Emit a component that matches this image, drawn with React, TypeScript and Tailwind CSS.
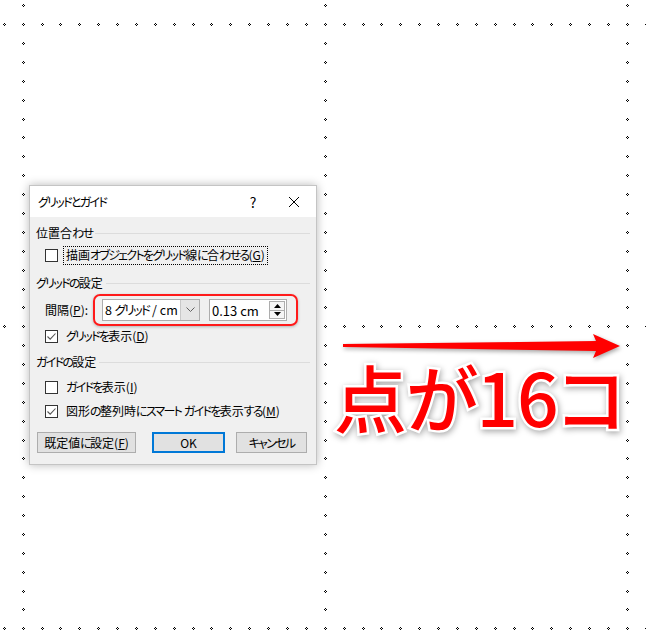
import React from "react";

const XS: number[] = [];
const YS: number[] = [];
for (let i = -1; i <= 33; i++) {
  XS.push(Math.round(22.7 + i * 18.88));
  YS.push(Math.round(24.2 + i * 18.88));
}

function DotGrid() {
  const dots: [number, number][] = [];
  const lineY = [0, 16, 32].map((i) => YS[i + 1]);
  const lineX = [0, 16, 32].map((i) => XS[i + 1]);
  lineY.forEach((y) => XS.forEach((x) => dots.push([x, y])));
  lineX.forEach((x) => YS.forEach((y) => dots.push([x, y])));
  const d = dots
    .map(
      ([x, y]) =>
        `M${x - 1} ${y}h1v1h-1z M${x + 1} ${y}h1v1h-1z M${x} ${y - 1}h1v1h-1z M${x} ${y + 1}h1v1h-1z`
    )
    .join(" ");
  return (
    <svg width={646} height={644} className="absolute left-0 top-0" shapeRendering="crispEdges">
      <path d={d} fill="#000" />
    </svg>
  );
}

// Render text with narrower kana (Meiryo UI-like proportional kana)
function T({ s }: { s: string }) {
  const parts: { k: boolean; t: string }[] = [];
  for (const ch of s) {
    const k = /[\u3040-\u30ff]/.test(ch);
    const last = parts[parts.length - 1];
    if (last && last.k === k) last.t += ch;
    else parts.push({ k, t: ch });
  }
  return (
    <>
      {parts.map((p, i) =>
        p.k ? (
          <span key={i} className="tracking-[-1.7px]">
            {p.t}
          </span>
        ) : (
          <span key={i}>{p.t}</span>
        )
      )}
    </>
  );
}

function Check({ checked }: { checked?: boolean }) {
  return (
    <div className="w-[13px] h-[13px] border border-[#333333] bg-white flex items-center justify-center shrink-0">
      {checked && (
        <svg width="11" height="11" viewBox="0 0 11 11">
          <path d="M1.5 5.5 L4.2 8.2 L9.5 2.5" fill="none" stroke="#555" strokeWidth="1.1" />
        </svg>
      )}
    </div>
  );
}

function Section({ label }: { label: string }) {
  return (
    <div className="h-[22px] flex items-center gap-[3px]">
      <span>
        <T s={label} />
      </span>
      <div className="flex-1 h-px bg-[#dcdcdc]" />
    </div>
  );
}

function Btn({ children, w, primary }: { children: React.ReactNode; w: string; primary?: boolean }) {
  return (
    <div
      className={
        "h-[21px] flex items-center justify-center bg-[#e1e1e1] " +
        w +
        (primary ? " border-2 border-[#0078d7]" : " border border-[#adadad]")
      }
    >
      {children}
    </div>
  );
}

export default function App() {
  return (
    <div className="relative w-[646px] h-[644px] bg-white overflow-hidden">
      <DotGrid />

      {/* Dialog window */}
      <div className="absolute left-[29px] top-[185px] w-[288px] h-[280px] bg-[#f0f0f0] border border-[#c4c4c4] shadow-[0_0_9px_rgba(0,0,0,0.28)] flex flex-col text-[12px] leading-none text-black font-['Noto_Sans_CJK_JP','Noto_Sans',sans-serif] [font-feature-settings:'palt']">
        <div className="h-[31px] bg-white flex items-center pl-[8px] shrink-0">
          <span className="flex-1">
            <T s="グリッドとガイド" />
          </span>
          <span className="w-[20px] text-center text-[14px] mr-[26px]">?</span>
          <svg width="10" height="10" viewBox="0 0 10 10" className="mr-[17px]">
            <path d="M0 0 L10 10 M10 0 L0 10" stroke="#000" strokeWidth="1" />
          </svg>
        </div>
        <div className="flex flex-col px-[6px] pt-[5px]">
          <Section label="位置合わせ" />
          <div className="h-[22px] flex items-center pl-[9px]">
            <Check />
            <span className="ml-[5px] h-[19px] px-[2px] flex items-center border border-dotted border-black whitespace-nowrap">
              <T s="描画オブジェクトをグリッド線に合わせる(" />
              <span className="underline">G</span>)
            </span>
          </div>
          <div className="mt-[6px]">
            <Section label="グリッドの設定" />
          </div>
          <div className="h-[32px] flex items-center pl-[9px]">
            <span className="w-[48px] whitespace-nowrap">
              間隔(<span className="underline">P</span>):
            </span>
            <div className="h-[32px] flex items-center border-2 border-[#ff1a1a] rounded-[7px] pl-[7px] pr-[9px] shadow-[0_1px_3px_rgba(0,0,0,0.25)]">
              <div className="w-[98px] h-[22px] flex border border-[#adadad] bg-white">
                <div className="flex-1 flex items-center pl-[2px] text-[12.5px] whitespace-nowrap overflow-hidden">
                  <span>8&nbsp;</span>
                  <T s="グリッド" />
                  <span>&nbsp;/ cm</span>
                </div>
                <div className="w-[19px] shrink-0 bg-[#e5e5e5] border-l border-[#c8c8c8] flex items-center justify-center">
                  <svg width="9" height="6" viewBox="0 0 9 6">
                    <path d="M0.5 0.5 L4.5 4.5 L8.5 0.5" fill="none" stroke="#606060" strokeWidth="1" />
                  </svg>
                </div>
              </div>
              <div className="ml-[9px] w-[78px] h-[22px] flex border border-[#adadad] bg-white">
                <div className="flex-1 flex items-center pl-[2px] text-[13px] whitespace-nowrap">0.13 cm</div>
                <div className="w-[16px] flex flex-col my-[1px] mr-[1px]">
                  <div className="flex-1 border border-[#adadad] bg-[#f5f5f5] flex items-center justify-center">
                    <svg width="7" height="4" viewBox="0 0 7 4">
                      <path d="M0 4 L3.5 0 L7 4 Z" fill="#000" />
                    </svg>
                  </div>
                  <div className="flex-1 border border-t-0 border-[#adadad] bg-[#f5f5f5] flex items-center justify-center">
                    <svg width="7" height="4" viewBox="0 0 7 4">
                      <path d="M0 0 L3.5 4 L7 0 Z" fill="#000" />
                    </svg>
                  </div>
                </div>
              </div>
            </div>
          </div>
          <div className="h-[20px] flex items-center pl-[9px]">
            <Check checked />
            <span className="ml-[8px] whitespace-nowrap">
              <T s="グリッドを表示(" />
              <span className="underline">D</span>)
            </span>
          </div>
          <div className="mt-[5px]">
            <Section label="ガイドの設定" />
          </div>
          <div className="mt-[2px] h-[24px] flex items-center pl-[9px]">
            <Check />
            <span className="ml-[8px] whitespace-nowrap">
              <T s="ガイドを表示(" />
              <span className="underline">I</span>)
            </span>
          </div>
          <div className="h-[24px] flex items-center pl-[9px]">
            <Check checked />
            <span className="ml-[8px] whitespace-nowrap">
              <T s="図形の整列時にスマート ガイドを表示する(" />
              <span className="underline">M</span>)
            </span>
          </div>
          <div className="mt-[9px] flex items-center pl-[1px]">
            <Btn w="w-[99px]">
              <T s="既定値に設定(" />
              <span className="underline">F</span>)
            </Btn>
            <div className="ml-[16px]">
              <Btn w="w-[73px]" primary>
                OK
              </Btn>
            </div>
            <div className="ml-[11px]">
              <Btn w="w-[71px]">
                <T s="キャンセル" />
              </Btn>
            </div>
          </div>
        </div>
      </div>

      {/* Arrow annotation */}
      <svg width="300" height="40" viewBox="0 0 300 40" className="absolute left-[330px] top-[326px] [filter:drop-shadow(1px_2px_2px_rgba(0,0,0,0.35))]">
        <path d="M13 18 L266 15 L263 8 L290 20 L263 32 L266 25 L13 21 Z" fill="#ff0000" />
      </svg>

      {/* Big text annotation */}
      <div className="absolute left-[334px] top-[359px] text-[73px] leading-none font-medium tracking-[-1px] text-[#ff0000] font-['Noto_Sans_CJK_JP','Noto_Sans',sans-serif] [font-feature-settings:'palt'] [-webkit-text-stroke:5px_white] [paint-order:stroke_fill] [filter:drop-shadow(1px_2px_3px_rgba(0,0,0,0.35))] whitespace-nowrap">
        点が16コ
      </div>
    </div>
  );
}
